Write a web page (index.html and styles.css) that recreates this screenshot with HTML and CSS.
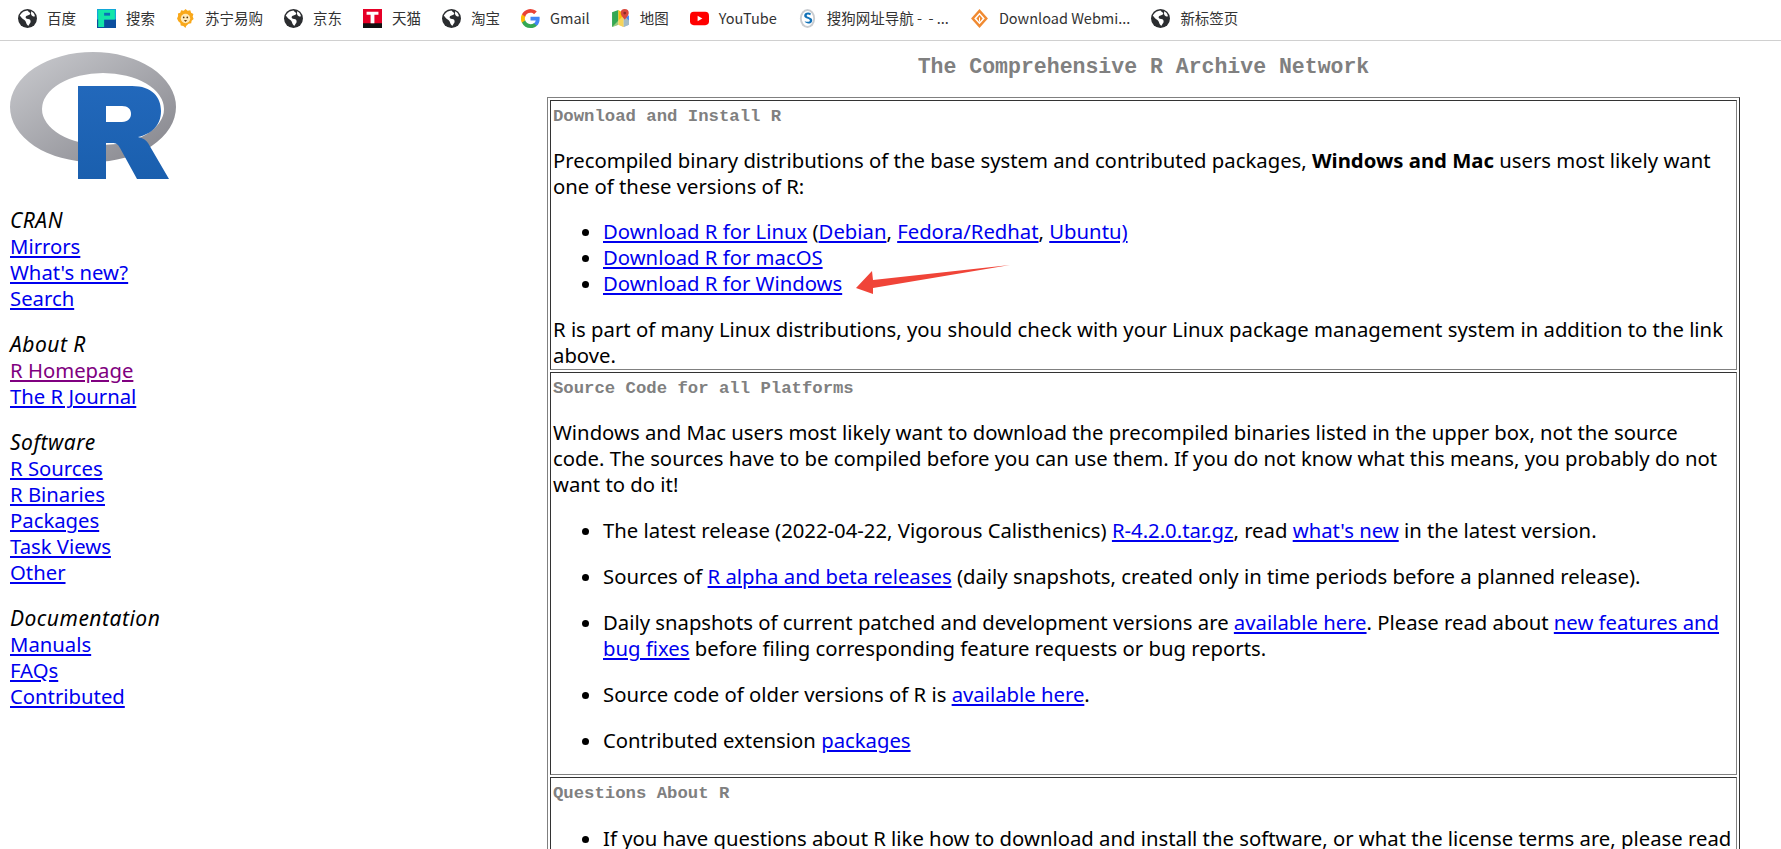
FILE: index.html
```html
<!DOCTYPE html>
<html lang="en">
<head>
<meta charset="utf-8">
<title>The Comprehensive R Archive Network</title>
<link rel="stylesheet" href="styles.css">
</head>
<body>
<svg class="defs" width="0" height="0" aria-hidden="true">
  <defs>
    <symbol id="globe" viewBox="0 0 16 16">
      <circle cx="8" cy="8" r="8" fill="#2b2d30"/>
      <path d="M1.5 5.5C3 2.6 5.5 1.4 8 1.2c.8 1.2 2 1.4 2.4 2.6C9.6 5.6 7.6 5 6.6 6.4 5.9 7.6 7.2 8.6 8.6 8.5c1.4 0 2.2 1 2 2.4-.2 1.2-1.4 1.7-1.6 3.2-1.5-.4-2-1.9-2.3-3C6.4 9.6 4.6 9 3.6 8 2.8 7.2 2.2 6.2 1.5 5.5Z" fill="#fff"/>
      <path d="M11.2 1.9c1.7.8 2.8 2.4 3.1 4.3-1.1.2-2.2-.2-2.9-1-.6-.9-.5-2.2-.2-3.3Z" fill="#fff"/>
    </symbol>
    <linearGradient id="ring" x1="0" y1="0" x2="1" y2="1">
      <stop offset="0" stop-color="#cbccd0"/>
      <stop offset="1" stop-color="#83838a"/>
    </linearGradient>
    <linearGradient id="rblue" x1="0" y1="0" x2="0" y2="1">
      <stop offset="0" stop-color="#2268bb"/>
      <stop offset="1" stop-color="#1a5fae"/>
    </linearGradient>
  </defs>
</svg>

<nav class="bookmarks">
  <a class="bm"><svg class="bm-icon"><use href="#globe"/></svg><span>百度</span></a>
  <a class="bm"><svg class="bm-icon" viewBox="0 0 16 20" preserveAspectRatio="none"><rect width="16" height="20" fill="#12a8d8"/><rect y="11" width="16" height="9" fill="#0b4f9e"/><path d="M1 1h14v10H6v8H1Z" fill="#13e6a8"/><rect x="6" y="4" width="5" height="3" fill="#0b6fb8"/></svg><span>搜索</span></a>
  <a class="bm"><svg class="bm-icon" viewBox="0 0 16 18"><path d="M8 0l2 1.6 2.5-.4.8 2.3 2.2 1.2-.7 2.4.9 2.3-1.9 1.7-.4 2.5-2.5.4L8.600 16 8 18l-2-1.900-2.500-.4-.4-2.500L1.200 11.500 0 9l1-2.300-.2-2.400 2.200-.8.9-2.300 2.500.4Z" fill="#f9a81a"/><circle cx="8" cy="9" r="4.500" fill="#ffe9b8"/><circle cx="6.300" cy="8" r=".8" fill="#5a3a10"/><circle cx="9.700" cy="8" r=".8" fill="#5a3a10"/><path d="M6.500 10.500h3L8 12.200Z" fill="#7a4a10"/></svg><span>苏宁易购</span></a>
  <a class="bm"><svg class="bm-icon"><use href="#globe"/></svg><span>京东</span></a>
  <a class="bm"><svg class="bm-icon" viewBox="0 0 16 20" preserveAspectRatio="none"><rect width="16" height="20" fill="#e60027"/><rect y="15" width="16" height="5" fill="#111"/><path d="M3 3h10v3H9.600v9H6.400V6H3Z" fill="#fff"/></svg><span>天猫</span></a>
  <a class="bm"><svg class="bm-icon"><use href="#globe"/></svg><span>淘宝</span></a>
  <a class="bm"><svg class="bm-icon" viewBox="0 0 16 16"><path d="M15.700 8.200c0-.6 0-1.100-.1-1.600H8v3h4.400a3.800 3.800 0 0 1-1.600 2.500v2.100h2.600c1.500-1.400 2.300-3.500 2.300-6Z" fill="#4285f4"/><path d="M8 16c2.200 0 4-.7 5.400-2l-2.600-2c-.7.500-1.700.8-2.800.8-2.100 0-3.900-1.400-4.500-3.300H.8v2.100A8 8 0 0 0 8 16Z" fill="#34a853"/><path d="M3.500 9.500a4.800 4.800 0 0 1 0-3V4.400H.8a8 8 0 0 0 0 7.200Z" fill="#fbbc05"/><path d="M8 3.200c1.200 0 2.200.4 3 1.200l2.300-2.300A8 8 0 0 0 .8 4.400l2.700 2.100C4.100 4.600 5.900 3.200 8 3.200Z" fill="#ea4335"/></svg><span>Gmail</span></a>
  <a class="bm"><svg class="bm-icon" viewBox="0 0 16 18"><path d="M0 3l6-2v14l-6 2Z" fill="#34a853"/><path d="M6 1l5 3v13l-5-2Z" fill="#fbbc05"/><path d="M11 9l5-3v9l-5 2Z" fill="#4285f4"/><path d="M0 17 11 6l5 5v4l-5 2-5-2Z" fill="#f3e8a0" opacity=".55"/><path d="M12 0a3.800 3.800 0 0 1 3.800 3.800C15.800 6.500 12 10 12 10S8.200 6.500 8.200 3.800A3.800 3.800 0 0 1 12 0Z" fill="#d9493d"/><circle cx="12" cy="3.800" r="1.300" fill="#8c2a22"/></svg><span>地图</span></a>
  <a class="bm"><svg class="bm-icon" viewBox="0 0 20 16"><rect y="1" width="20" height="14" rx="4" fill="#f00"/><path d="M8 5l5 3-5 3Z" fill="#fff"/></svg><span>YouTube</span></a>
  <a class="bm"><svg class="bm-icon" viewBox="0 0 16 20"><ellipse cx="8" cy="10" rx="8" ry="10" fill="#c9ccd0"/><ellipse cx="8" cy="10" rx="6" ry="8" fill="#fff"/><path d="M11.500 4.500C8.500 3 4.500 4 4.500 7c0 3.500 6 2.500 6 5 0 1.600-2.500 2-5.500 1 1 3 7.500 3.500 8-1 .3-3.500-5.800-3-5.800-5.200 0-1 1.800-1.300 3.800-.3Z" fill="#1272b8"/></svg><span>搜狗网址导航 -&nbsp; - ...</span></a>
  <a class="bm"><svg class="bm-icon" viewBox="0 0 16 18"><path d="M8 0 0 9l8 9 8-9Zm0 3.500L13 9l-5 5.500L3 9Z" fill="#f08a32"/><path d="M8 5.500 5 9l3 3.500L11 9Z" fill="#f08a32"/><path d="M8 8v4" stroke="#fff"/></svg><span>Download Webmi...</span></a>
  <a class="bm"><svg class="bm-icon"><use href="#globe"/></svg><span>新标签页</span></a>
</nav>

<div class="layout">
  <aside class="sidebar">
    <svg class="logo" viewBox="0 41 180 140" role="img" aria-label="R logo">
      <path fill="url(#ring)" fill-rule="evenodd" d="M10 107a83 55 0 1 0 166 0a83 55 0 1 0-166 0ZM42 109a61 36 0 1 1 122 0a61 36 0 1 1-122 0Z"/>
      <path fill="url(#rblue)" fill-rule="evenodd" d="M78 86H132C152 86 161 97 161 111C161 126 151 134 138 137C143 138 146 140 148 143L169 179H137L120 148C118 144 116 143 112 143H106V179H78ZM106 106V122H122C128 122 131 118 131 114C131 109 128 106 122 106Z"/>
    </svg>
    <div class="nav-group">
      <em>CRAN</em>
      <a href="#">Mirrors</a>
      <a href="#">What's new?</a>
      <a href="#">Search</a>
    </div>
    <div class="nav-group">
      <em>About R</em>
      <a href="#" class="visited">R Homepage</a>
      <a href="#">The R Journal</a>
    </div>
    <div class="nav-group">
      <em>Software</em>
      <a href="#">R Sources</a>
      <a href="#">R Binaries</a>
      <a href="#">Packages</a>
      <a href="#">Task Views</a>
      <a href="#">Other</a>
    </div>
    <div class="nav-group">
      <em>Documentation</em>
      <a href="#">Manuals</a>
      <a href="#">FAQs</a>
      <a href="#">Contributed</a>
    </div>
  </aside>

  <main class="content">
    <h1 class="site-title">The Comprehensive R Archive Network</h1>
    <table class="boxes">
      <tr><td>
        <h2>Download and Install R</h2>
        <p>Precompiled binary distributions of the base system and contributed packages, <strong>Windows and Mac</strong> users most likely want one of these versions of R:</p>
        <ul class="tight">
          <li><a href="#">Download R for Linux</a> (<a href="#">Debian</a>, <a href="#">Fedora/Redhat</a>, <a href="#">Ubuntu)</a></li>
          <li><a href="#">Download R for macOS</a></li>
          <li><a href="#">Download R for Windows</a></li>
        </ul>
        <p>R is part of many Linux distributions, you should check with your Linux package management system in addition to the link above.</p>
      </td></tr>
      <tr><td>
        <h2>Source Code for all Platforms</h2>
        <p>Windows and Mac users most likely want to download the precompiled binaries listed in the upper box, not the source code. The sources have to be compiled before you can use them. If you do not know what this means, you probably do not want to do it!</p>
        <ul>
          <li>The latest release (2022-04-22, Vigorous Calisthenics) <a href="#">R-4.2.0.tar.gz</a>, read <a href="#">what's new</a> in the latest version.</li>
          <li>Sources of <a href="#">R alpha and beta releases</a> (daily snapshots, created only in time periods before a planned release).</li>
          <li>Daily snapshots of current patched and development versions are <a href="#">available here</a>. Please read about <a href="#">new features and bug fixes</a> before filing corresponding feature requests or bug reports.</li>
          <li>Source code of older versions of R is <a href="#">available here</a>.</li>
          <li>Contributed extension <a href="#">packages</a></li>
        </ul>
      </td></tr>
      <tr><td>
        <h2>Questions About R</h2>
        <ul>
          <li>If you have questions about R like how to download and install the software, or what the license terms are, please read our <a href="#">answers to frequently asked questions</a> before you send an email.</li>
        </ul>
      </td></tr>
    </table>
  </main>
</div>

<svg class="arrow" viewBox="0 0 156 32" aria-hidden="true"><path d="M155 1 18 16 17 7 1 24 18 30 18 24Z" fill="#f04438"/></svg>
</body>
</html>
```
FILE: styles.css
```css
html, body {
  margin: 0;
  height: 849px;
  overflow: hidden;
  background: #fff;
}
body {
  position: relative;
  font-family: "Noto Sans", "Noto Sans CJK SC", sans-serif;
  font-size: 20.3px;
  line-height: 26px;
  color: #000;
}
.defs { position: absolute; }
a { color: #0000ee; }
a.visited { color: #800080; }

.bookmarks {
  display: flex;
  align-items: center;
  box-sizing: border-box;
  height: 41px;
  padding: 0 0 4px 18px;
  gap: 21px;
  border-bottom: 1px solid #d0d0d0;
  font-family: "Noto Sans CJK SC", "Noto Sans", sans-serif;
  font-size: 14.5px;
  line-height: 18px;
  color: #333;
  white-space: nowrap;
}
.bm { display: flex; align-items: center; gap: 10px; color: #333; }
.bm-icon { width: 19px; height: 19px; flex: none; }

.layout { display: flex; align-items: flex-start; }
.sidebar { flex: none; width: 537px; padding-left: 10px; }
.logo { display: block; width: 180px; height: 140px; margin: 0 0 26px -10px; }
.nav-group { margin-bottom: 20px; }
.nav-group em, .nav-group a { display: block; width: max-content; }
.nav-group em { font-size: 21px; letter-spacing: .5px; }

.content { flex: none; width: 1193px; }
.site-title {
  margin: 13px 0 17px;
  text-align: center;
  font-family: "Liberation Mono", monospace;
  font-size: 21.5px;
  line-height: 26px;
  font-weight: 700;
  color: #808080;
}
.boxes {
  width: 100%;
  border-collapse: separate;
  border-spacing: 2px;
  border: 1px solid;
  border-color: #808080 #333 #333 #808080;
}
.boxes td {
  padding: 1px 2px;
  border: 1px solid;
  border-color: #333 #808080 #808080 #333;
  vertical-align: top;
}
.boxes h2 {
  margin: 0 0 -3px;
  font-family: "Liberation Mono", monospace;
  font-size: 17.3px;
  line-height: 29px;
  font-weight: 700;
  color: #808080;
}
.boxes p { margin: 19px 0; }
.boxes p:last-child { margin-bottom: 0; }
.boxes ul { margin: 20px 0; padding-left: 50px; }
.boxes li { margin-bottom: 20px; }
.boxes li:last-child { margin-bottom: 0; }
.boxes ul.tight { margin: 18px 0 20px; }
.boxes ul.tight li { margin-bottom: 0; }

.arrow {
  position: absolute;
  left: 855px;
  top: 264px;
  width: 156px;
  height: 32px;
}
```
